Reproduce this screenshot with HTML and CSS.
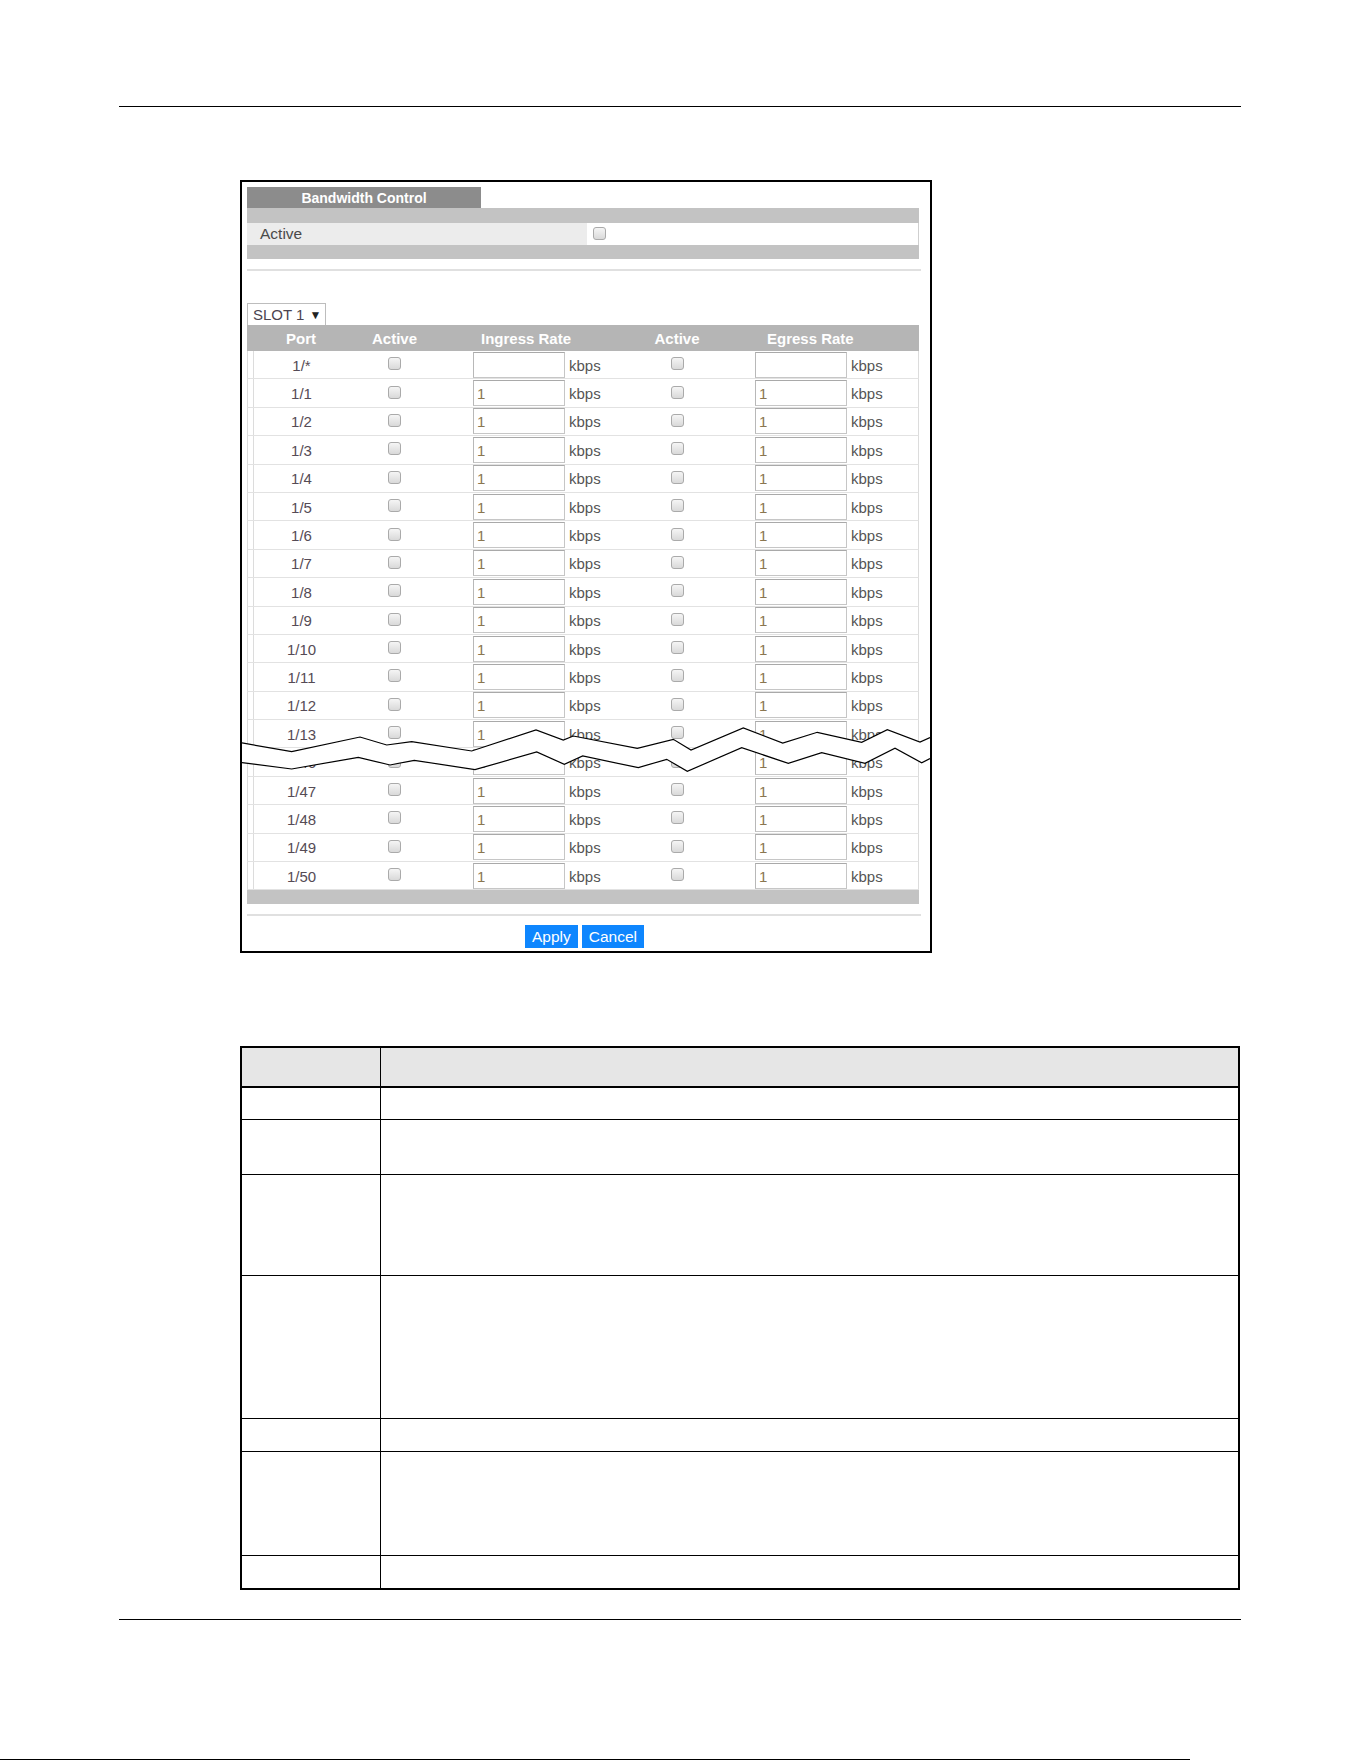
FILE: index.html
```html
<!DOCTYPE html>
<html lang="en">
<head>
    <meta charset="UTF-8">
    <meta name="viewport" content="width=device-width, initial-scale=1.0">
    <title>Bandwidth Control</title>
    <link rel="stylesheet" href="styles.css">
</head>
<body>
    <div class="rule top-rule"></div>

    <div class="frame">
        <div class="tab">Bandwidth Control</div>
        <div class="band band-top"></div>
        <div class="active-row">
            <div class="active-label">Active</div>
            <div class="active-value"><input type="checkbox"></div>
        </div>
        <div class="band"></div>
        <div class="divider"></div>

        <div class="slot-select">SLOT 1 <span class="arrow">&#9660;</span></div>

        <div class="ports">
            <div class="ports-head">
                <span></span>
                <span class="head-c">Port</span>
                <span class="head-c">Active</span>
                <span class="head-rate">Ingress Rate</span>
                <span class="head-c">Active</span>
                <span class="head-rate egress">Egress Rate</span>
            </div>

            <div class="port-row"><span></span><span class="port">1/*</span><span class="cell"><input type="checkbox"></span><span class="rate"><input type="text" value=""><span class="unit">kbps</span></span><span class="cell"><input type="checkbox"></span><span class="rate"><input type="text" value=""><span class="unit">kbps</span></span></div>
            <div class="port-row"><span></span><span class="port">1/1</span><span class="cell"><input type="checkbox"></span><span class="rate"><input type="text" value="1"><span class="unit">kbps</span></span><span class="cell"><input type="checkbox"></span><span class="rate"><input type="text" value="1"><span class="unit">kbps</span></span></div>
            <div class="port-row"><span></span><span class="port">1/2</span><span class="cell"><input type="checkbox"></span><span class="rate"><input type="text" value="1"><span class="unit">kbps</span></span><span class="cell"><input type="checkbox"></span><span class="rate"><input type="text" value="1"><span class="unit">kbps</span></span></div>
            <div class="port-row"><span></span><span class="port">1/3</span><span class="cell"><input type="checkbox"></span><span class="rate"><input type="text" value="1"><span class="unit">kbps</span></span><span class="cell"><input type="checkbox"></span><span class="rate"><input type="text" value="1"><span class="unit">kbps</span></span></div>
            <div class="port-row"><span></span><span class="port">1/4</span><span class="cell"><input type="checkbox"></span><span class="rate"><input type="text" value="1"><span class="unit">kbps</span></span><span class="cell"><input type="checkbox"></span><span class="rate"><input type="text" value="1"><span class="unit">kbps</span></span></div>
            <div class="port-row"><span></span><span class="port">1/5</span><span class="cell"><input type="checkbox"></span><span class="rate"><input type="text" value="1"><span class="unit">kbps</span></span><span class="cell"><input type="checkbox"></span><span class="rate"><input type="text" value="1"><span class="unit">kbps</span></span></div>
            <div class="port-row"><span></span><span class="port">1/6</span><span class="cell"><input type="checkbox"></span><span class="rate"><input type="text" value="1"><span class="unit">kbps</span></span><span class="cell"><input type="checkbox"></span><span class="rate"><input type="text" value="1"><span class="unit">kbps</span></span></div>
            <div class="port-row"><span></span><span class="port">1/7</span><span class="cell"><input type="checkbox"></span><span class="rate"><input type="text" value="1"><span class="unit">kbps</span></span><span class="cell"><input type="checkbox"></span><span class="rate"><input type="text" value="1"><span class="unit">kbps</span></span></div>
            <div class="port-row"><span></span><span class="port">1/8</span><span class="cell"><input type="checkbox"></span><span class="rate"><input type="text" value="1"><span class="unit">kbps</span></span><span class="cell"><input type="checkbox"></span><span class="rate"><input type="text" value="1"><span class="unit">kbps</span></span></div>
            <div class="port-row"><span></span><span class="port">1/9</span><span class="cell"><input type="checkbox"></span><span class="rate"><input type="text" value="1"><span class="unit">kbps</span></span><span class="cell"><input type="checkbox"></span><span class="rate"><input type="text" value="1"><span class="unit">kbps</span></span></div>
            <div class="port-row"><span></span><span class="port">1/10</span><span class="cell"><input type="checkbox"></span><span class="rate"><input type="text" value="1"><span class="unit">kbps</span></span><span class="cell"><input type="checkbox"></span><span class="rate"><input type="text" value="1"><span class="unit">kbps</span></span></div>
            <div class="port-row"><span></span><span class="port">1/11</span><span class="cell"><input type="checkbox"></span><span class="rate"><input type="text" value="1"><span class="unit">kbps</span></span><span class="cell"><input type="checkbox"></span><span class="rate"><input type="text" value="1"><span class="unit">kbps</span></span></div>
            <div class="port-row"><span></span><span class="port">1/12</span><span class="cell"><input type="checkbox"></span><span class="rate"><input type="text" value="1"><span class="unit">kbps</span></span><span class="cell"><input type="checkbox"></span><span class="rate"><input type="text" value="1"><span class="unit">kbps</span></span></div>
            <div class="port-row"><span></span><span class="port">1/13</span><span class="cell"><input type="checkbox"></span><span class="rate"><input type="text" value="1"><span class="unit">kbps</span></span><span class="cell"><input type="checkbox"></span><span class="rate"><input type="text" value="1"><span class="unit">kbps</span></span></div>
            <div class="port-row"><span></span><span class="port">1/46</span><span class="cell"><input type="checkbox"></span><span class="rate"><input type="text" value="1"><span class="unit">kbps</span></span><span class="cell"><input type="checkbox"></span><span class="rate"><input type="text" value="1"><span class="unit">kbps</span></span></div>
            <div class="port-row"><span></span><span class="port">1/47</span><span class="cell"><input type="checkbox"></span><span class="rate"><input type="text" value="1"><span class="unit">kbps</span></span><span class="cell"><input type="checkbox"></span><span class="rate"><input type="text" value="1"><span class="unit">kbps</span></span></div>
            <div class="port-row"><span></span><span class="port">1/48</span><span class="cell"><input type="checkbox"></span><span class="rate"><input type="text" value="1"><span class="unit">kbps</span></span><span class="cell"><input type="checkbox"></span><span class="rate"><input type="text" value="1"><span class="unit">kbps</span></span></div>
            <div class="port-row"><span></span><span class="port">1/49</span><span class="cell"><input type="checkbox"></span><span class="rate"><input type="text" value="1"><span class="unit">kbps</span></span><span class="cell"><input type="checkbox"></span><span class="rate"><input type="text" value="1"><span class="unit">kbps</span></span></div>
            <div class="port-row"><span></span><span class="port">1/50</span><span class="cell"><input type="checkbox"></span><span class="rate"><input type="text" value="1"><span class="unit">kbps</span></span><span class="cell"><input type="checkbox"></span><span class="rate"><input type="text" value="1"><span class="unit">kbps</span></span></div>
        </div>

        <div class="band"></div>
        <div class="divider"></div>
        <div class="buttons">
            <button type="button">Apply</button>
            <button type="button">Cancel</button>
        </div>

        <!-- torn edge: ports 1/14 to 1/45 are cut out of the list -->
        <svg class="break" width="688" height="50" viewBox="242 725 688 50">
            <polygon fill="#fff" points="242,742.9 291.7,751.7 360,737 386.7,745 411.7,741.7 471.7,751 536,730 563.3,740 573.3,736 637.3,748.3 673.3,739.3 691,750 743.3,728 782.7,743 817.3,732.3 861.7,742.3 887.3,729.7 920,742 930,737.5 930,758.5 921.7,762.7 895,748.3 865,763.3 821.7,752.7 788.3,763.3 741.7,747.7 687.3,771.3 666.7,759.3 638.3,767.7 582.7,756 564.3,764.3 536.7,752 475,769.7 414.3,760.3 390,765 358.3,757.3 291.7,769 242,762.6"/>
            <polyline fill="none" stroke="#000" stroke-width="1.2" points="242,742.9 291.7,751.7 360,737 386.7,745 411.7,741.7 471.7,751 536,730 563.3,740 573.3,736 637.3,748.3 673.3,739.3 691,750 743.3,728 782.7,743 817.3,732.3 861.7,742.3 887.3,729.7 920,742 930,737.5"/>
            <polyline fill="none" stroke="#000" stroke-width="1.2" points="242,762.6 291.7,769 358.3,757.3 390,765 414.3,760.3 475,769.7 536.7,752 564.3,764.3 582.7,756 638.3,767.7 666.7,759.3 687.3,771.3 741.7,747.7 788.3,763.3 821.7,752.7 865,763.3 895,748.3 921.7,762.7 930,758.5"/>
        </svg>
    </div>

    <div class="desc">
        <div class="desc-row desc-head"><div class="label"></div><div></div></div>
        <div class="desc-row h32"><div class="label"></div><div></div></div>
        <div class="desc-row h55"><div class="label"></div><div></div></div>
        <div class="desc-row h101"><div class="label"></div><div></div></div>
        <div class="desc-row h143"><div class="label"></div><div></div></div>
        <div class="desc-row h33"><div class="label"></div><div></div></div>
        <div class="desc-row h104"><div class="label"></div><div></div></div>
        <div class="desc-row h32 last"><div class="label"></div><div></div></div>
    </div>

    <div class="rule bottom-rule"></div>
    <div class="edge"></div>
</body>
</html>
```

FILE: styles.css
```css
body {
    margin: 0;
    font-family: "Liberation Sans", Arial, sans-serif;
    background: #fff;
    color: #444;
}

.rule {
    width: 1122px;
    height: 1px;
    margin-left: 119px;
    background: #000;
}

.top-rule {
    margin-top: 106px;
}

.bottom-rule {
    margin-top: 29px;
}

.edge {
    width: 1190px;
    height: 1px;
    margin-top: 139px;
    background: #000;
}

/* screen capture box */
.frame {
    position: relative;
    box-sizing: border-box;
    width: 692px;
    margin: 73px 0 0 240px;
    padding: 5px 0 3px 5px;
    border: 2px solid #000;
}

.tab {
    width: 234px;
    height: 21px;
    line-height: 22px;
    background: #8c8c8c;
    color: #fff;
    font-weight: bold;
    font-size: 14px;
    text-align: center;
}

.band {
    width: 672px;
    height: 14px;
    background: #c3c3c3;
}

.band-top {
    height: 15px;
}

.active-row {
    display: flex;
    width: 672px;
    height: 22px;
}

.active-label {
    width: 340px;
    padding-left: 13px;
    box-sizing: border-box;
    background: #ececec;
    font-size: 15.5px;
    line-height: 22px;
    color: #4a4a4a;
}

.active-value {
    flex: 1;
    display: flex;
    align-items: center;
    padding-left: 6px;
    background: #fff;
    border-right: 1px solid #cfcfcf;
}

.divider {
    width: 674px;
    height: 2px;
    margin-top: 10px;
    background: #e0e0e0;
}

.slot-select {
    box-sizing: border-box;
    width: 79px;
    height: 22px;
    margin-top: 32px;
    padding-left: 5px;
    border: 1px solid #bdbdbd;
    border-bottom: none;
    font-size: 15px;
    line-height: 21px;
    color: #4b4450;
}

.slot-select .arrow {
    font-size: 12px;
    color: #222;
    margin-left: 1px;
    vertical-align: 1px;
}

input[type="checkbox"] {
    -webkit-appearance: none;
    appearance: none;
    display: block;
    width: 13px;
    height: 13px;
    margin: 0 0 2px 0;
    border: 1px solid #aaa;
    border-radius: 3px;
    background: linear-gradient(#f5f5f5, #d9d9d9);
}

/* port table */
.ports {
    width: 672px;
}

.ports-head {
    display: grid;
    grid-template-columns: 6px 96px 91px 192px 90px 197px;
    height: 26px;
    line-height: 27px;
    background: #b5b5b5;
    color: #fff;
    font-weight: bold;
    font-size: 15px;
}

.head-c {
    text-align: center;
}

.head-rate {
    padding-left: 41px;
}

.head-rate.egress {
    padding-left: 45px;
}

.port-row {
    display: grid;
    grid-template-columns: 5px 96px 91px 192px 90px 196px;
    align-items: center;
    box-sizing: border-box;
    height: 28.4px;
    border-left: 1px solid #dcdcdc;
    border-right: 1px solid #dcdcdc;
    border-bottom: 1px solid #e2e2e2;
    font-size: 15px;
}

.port {
    align-self: stretch;
    display: flex;
    align-items: center;
    justify-content: center;
    padding-top: 1px;
    border-left: 1px solid #dcdcdc;
    color: #554b55;
}

.cell {
    display: flex;
    justify-content: center;
}

.rate {
    display: flex;
    align-items: center;
    padding-left: 33px;
}

.rate input[type="text"] {
    box-sizing: border-box;
    width: 92px;
    height: 26px;
    margin: 0;
    padding: 1px 3px 0;
    border: 1px solid #c6c6c6;
    border-top-color: #a9a9a9;
    border-left-color: #b8b8b8;
    font-family: "Liberation Sans", Arial, sans-serif;
    font-size: 15px;
    color: #8a7650;
    background: #fff;
}

.unit {
    padding: 1px 0 0 4px;
    color: #555;
}

.buttons {
    display: flex;
    justify-content: center;
    gap: 4px;
    width: 675px;
    margin-top: 9px;
}

.buttons button {
    height: 23px;
    padding: 0 7px;
    border: none;
    background: #0e86fe;
    color: #fff;
    font-family: "Liberation Sans", Arial, sans-serif;
    font-size: 15.5px;
}

.break {
    position: absolute;
    left: 0;
    top: 543px;
}

/* field description table */
.desc {
    box-sizing: border-box;
    width: 1000px;
    margin: 93px 0 0 240px;
    border: 2px solid #000;
}

.desc-row {
    display: grid;
    grid-template-columns: 139px 1fr;
    box-sizing: border-box;
    border-bottom: 1px solid #000;
}

.desc-row .label {
    border-right: 1px solid #000;
}

.desc-head {
    height: 40px;
    background: #e6e6e6;
    border-bottom: 2px solid #000;
}

.desc-row.last {
    border-bottom: none;
}

.h32 { height: 32px; }
.h33 { height: 33px; }
.h55 { height: 55px; }
.h101 { height: 101px; }
.h104 { height: 104px; }
.h143 { height: 143px; }
```
